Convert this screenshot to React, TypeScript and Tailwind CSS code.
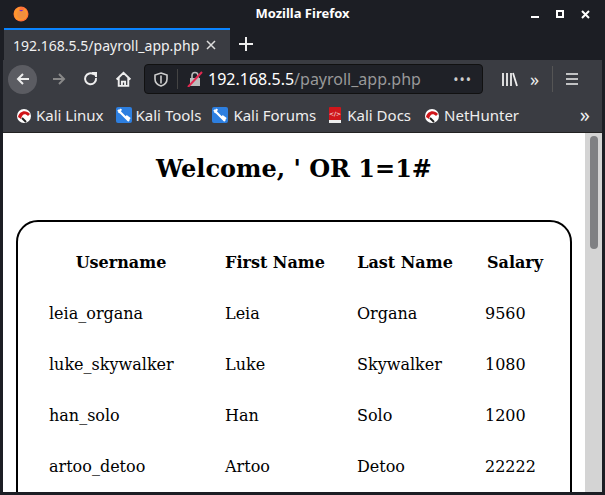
import React from "react";

const rows = [
  ["leia_organa", "Leia", "Organa", "9560"],
  ["luke_skywalker", "Luke", "Skywalker", "1080"],
  ["han_solo", "Han", "Solo", "1200"],
  ["artoo_detoo", "Artoo", "Detoo", "22222"],
];

const KaliIcon = ({ kind }: { kind: "dragon" | "tools" | "docs" }) => {
  if (kind === "docs")
    return (
      <svg width="14" height="16" viewBox="0 0 14 16">
        <rect x="1" y="0" width="12" height="15" rx="1" fill="#d0161b" />
        <rect x="1" y="13" width="12" height="3" fill="#eee" />
        <text x="7" y="9" fontSize="6" fill="#fff" textAnchor="middle" fontFamily="DejaVu Sans">&lt;/&gt;</text>
      </svg>
    );
  if (kind === "tools")
    return (
      <svg width="16" height="16" viewBox="0 0 16 16">
        <rect width="16" height="16" rx="2" fill="#2d7fe0" />
        <path d="M2 3 L13 14 M5 2 L3 6 M10 9 L14 12" stroke="#fff" strokeWidth="2.2" />
      </svg>
    );
  return (
    <svg width="16" height="16" viewBox="0 0 16 16">
      <circle cx="8" cy="9" r="7" fill="#fff" />
      <path d="M2 10 C3 4 10 2 14 7 L12 9 C9 6 6 7 5 12 Z" fill="#d0161b" />
      <path d="M6 11 L10 15" stroke="#222" strokeWidth="2" />
    </svg>
  );
};

export default function App() {
  return (
    <div className="w-[605px] h-[495px] bg-[#1c1e24] flex flex-col overflow-hidden border-x-[3px] border-b-[3px] border-[#1c1e24]" style={{ fontFamily: "'Noto Sans', sans-serif" }}>
      {/* title bar */}
      <div className="h-[28px] flex items-center relative text-white shrink-0">
        <svg className="ml-[10px]" width="16" height="16" viewBox="0 0 16 16">
          <circle cx="8" cy="8" r="7.5" fill="#ff7139" />
          <circle cx="8.5" cy="8.5" r="4.5" fill="#6e2ad6" />
          <path d="M1 8 C1 3 5 1 8 1 C5 3 6 6 9 5 C12 4 11 2 11 2 C15 4 15 9 13 12 C10 15 4 15 2 12 Z" fill="#ff9a2e" opacity="0.9" />
        </svg>
        <div className="absolute inset-x-0 text-center text-[13px] font-bold pointer-events-none">Mozilla Firefox</div>
        <div className="ml-auto flex items-center gap-[17px] mr-[12px] text-[13px]">
          <div className="w-[8px] h-[2px] bg-white mt-[6px]" />
          <div className="w-[8px] h-[8px] border-2 border-white" />
          <svg width="9" height="9" viewBox="0 0 9 9"><path d="M1 1 L8 8 M8 1 L1 8" stroke="#fff" strokeWidth="2" /></svg>
        </div>
      </div>
      {/* tabs */}
      <div className="h-[32px] flex items-stretch shrink-0">
        <div className="ml-[1px] w-[226px] bg-[#3a3c42] border-t-2 border-[#0a84ff] flex items-center pl-[9px] text-[14px] text-[#f0f0f0]">
          <span>192.168.5.5/payroll_app.php</span>
          <svg className="ml-[7px]" width="10" height="10" viewBox="0 0 10 10"><path d="M1 1 L9 9 M9 1 L1 9" stroke="#ddd" strokeWidth="1.5" /></svg>
        </div>
        <div className="flex items-center ml-[8px]">
          <svg width="16" height="16" viewBox="0 0 16 16"><path d="M8 1 V15 M1 8 H15" stroke="#eee" strokeWidth="2" /></svg>
        </div>
      </div>
      {/* nav bar */}
      <div className="h-[38px] bg-[#3a3c42] flex items-center shrink-0 text-[#eee]">
        <div className="ml-[5px] w-[29px] h-[29px] rounded-full bg-[#5b5c62] flex items-center justify-center">
          <svg width="16" height="16" viewBox="0 0 16 16" fill="none" stroke="#eee" strokeWidth="2"><path d="M14 8 H3 M8 3 L3 8 L8 13" /></svg>
        </div>
        <svg className="ml-[14px]" width="16" height="16" viewBox="0 0 16 16" fill="none" stroke="#888" strokeWidth="2"><path d="M2 8 H13 M8 3 L13 8 L8 13" /></svg>
        <svg className="ml-[16px]" width="16" height="16" viewBox="0 0 16 16" fill="none" stroke="#eee" strokeWidth="2"><path d="M13 7 A5.5 5.5 0 1 1 11 3.5" /><path d="M9 2 L13 2 L13 6" fill="#eee" /></svg>
        <svg className="ml-[16px]" width="17" height="17" viewBox="0 0 16 16" fill="none" stroke="#eee" strokeWidth="1.8"><path d="M1.5 8 L8 1.8 L14.5 8 M3.5 6.5 V14 H12.5 V6.5 M6.5 14 V10 H9.5 V14" /></svg>
        <div className="ml-[12px] w-[339px] h-[30px] rounded-[4px] bg-[#1f2127] border border-[#111] flex items-center">
          <svg className="ml-[9px]" width="14" height="15" viewBox="0 0 14 15" fill="none" stroke="#ccc" strokeWidth="1.6"><path d="M7 1 L13 3 V7 C13 11 10 13 7 14 C4 13 1 11 1 7 V3 Z" /><path d="M7 3.5 V11.5" /></svg>
          <div className="ml-[9px] w-[1px] h-[20px] bg-[#444]" />
          <svg className="ml-[9px]" width="16" height="16" viewBox="0 0 16 16"><rect x="3" y="7" width="10" height="8" fill="#bbb" /><path d="M5 7 V4.5 A3 3 0 0 1 11 4.5 V7" stroke="#bbb" strokeWidth="1.6" fill="none" /><path d="M1 16 L15 1" stroke="#e22850" strokeWidth="2" /></svg>
          <span className="ml-[5px] text-[16px]"><span className="text-white">192.168.5.5</span><span className="text-[#999]">/payroll_app.php</span></span>
          <span className="ml-auto mr-[10px] text-[#ccc] text-[14px] tracking-[1px]">•••</span>
        </div>
        <svg className="ml-[18px]" width="17" height="16" viewBox="0 0 17 16" stroke="#eee" strokeWidth="1.8"><path d="M2 2 V15 M6 2 V15 M10 2 V15 M12 2 L16 15" /></svg>
        <span className="ml-[12px] text-[18px]">»</span>
        <div className="ml-[13px] w-[1px] h-[26px] bg-[#555]" />
        <svg className="ml-[12px]" width="14" height="14" viewBox="0 0 14 14" stroke="#eee" strokeWidth="1.6"><path d="M1 2 H13 M1 7 H13 M1 12 H13" /></svg>
      </div>
      {/* bookmarks */}
      <div className="h-[35px] bg-[#3a3c42] flex items-center text-[15px] text-[#eee] shrink-0 border-b border-[#222]">
        <div className="ml-[13px] flex items-center gap-[4px]"><KaliIcon kind="dragon" /><span>Kali Linux</span></div>
        <div className="ml-[12px] flex items-center gap-[4px]"><KaliIcon kind="tools" /><span>Kali Tools</span></div>
        <div className="ml-[11px] flex items-center gap-[5px]"><KaliIcon kind="tools" /><span>Kali Forums</span></div>
        <div className="ml-[12px] flex items-center gap-[5px]"><KaliIcon kind="docs" /><span>Kali Docs</span></div>
        <div className="ml-[13px] flex items-center gap-[4px]"><KaliIcon kind="dragon" /><span>NetHunter</span></div>
        <span className="ml-auto mr-[12px] text-[20px] leading-none">»</span>
      </div>
      {/* content */}
      <div className="flex-1 flex min-h-0">
        <div className="flex-1 bg-white overflow-hidden text-black" style={{ fontFamily: "'DejaVu Serif', serif" }}>
          <h1 className="text-center font-bold text-[24px] mt-[18px]">Welcome, ' OR 1=1#</h1>
          <div className="mx-[13px] mt-[33px] border-2 border-black rounded-[22px] pl-[31px] pt-[15px] h-[400px]">
            <div className="grid grid-cols-[144px_100px_96px_60px] gap-x-[32px] text-[16px]">
              {["Username", "First Name", "Last Name", "Salary"].map((h) => (
                <div key={h} className="h-[51px] leading-[51px] font-bold text-center whitespace-nowrap">{h}</div>
              ))}
              {rows.map((r) =>
                r.map((c, i) => (
                  <div key={r[0] + i} className="h-[51px] leading-[51px] whitespace-nowrap">{c}</div>
                ))
              )}
            </div>
          </div>
        </div>
        <div className="w-[17px] bg-[#d4d4d4] flex justify-center pt-[3px]">
          <div className="w-[8px] h-[113px] rounded-full bg-[#7f8083]" />
        </div>
      </div>
    </div>
  );
}
